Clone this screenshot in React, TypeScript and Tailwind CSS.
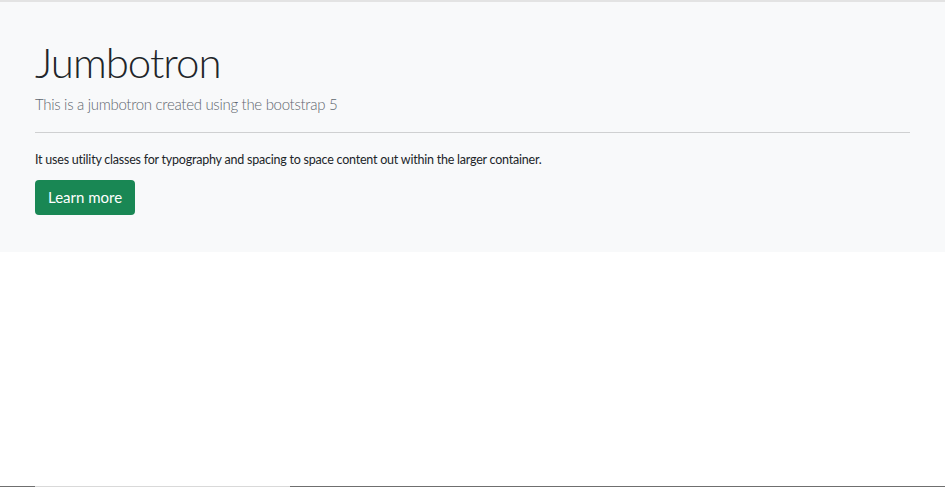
export default function App() {
    return (
        <div className="min-h-[487px] flex flex-col bg-white border-t-2 border-[#e3e3e3] font-['Lato',sans-serif]">
            <div className="bg-[#f8f9fa] h-[250px] px-[35px] pt-[34px]">
                <h1 className="text-[42px] leading-[53px] font-light tracking-[-1px] text-[#212529]">
                    Jumbotron
                </h1>
                <p className="mt-[3px] text-[15px] leading-[24px] font-light tracking-[-0.3px] text-[#5f676f]">
                    This is a jumbotron created using the bootstrap 5
                </p>
                <hr className="mt-[16px] border-0 h-px bg-[#cfd0d1]" />
                <p className="mt-[16.5px] text-[12.5px] leading-[19.5px] tracking-[-0.22px] text-[#212529]">
                    It uses utility classes for typography and spacing to space content out within the larger container.
                </p>
                <button className="mt-[10.5px] h-[35px] px-[13px] rounded-[4px] bg-[#198754] text-white text-[15px] leading-none">
                    Learn more
                </button>
            </div>
            <div className="flex-1" />
            <div className="flex h-px">
                <div className="w-[35px] bg-[#6f6f6f]" />
                <div className="w-[255px] bg-[#d9d9d9]" />
                <div className="flex-1 bg-[#6f6f6f]" />
            </div>
        </div>
    );
}
